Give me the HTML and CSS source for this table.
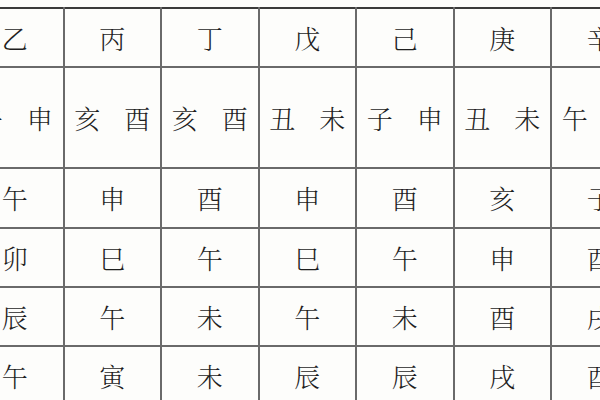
FILE: index.html
```html
<!DOCTYPE html>
<html lang="zh">
<head>
<meta charset="utf-8">
<link rel="stylesheet" href="styles.css">
</head>
<body>
<table class="grid">
  <colgroup>
    <col class="c"><col class="c"><col class="c"><col class="c"><col class="c"><col class="c"><col class="c">
  </colgroup>
  <tr class="r-head"><td>乙</td><td>丙</td><td>丁</td><td>戊</td><td>己</td><td>庚</td><td>辛</td></tr>
  <tr class="r-pair"><td>午　申</td><td>亥　酉</td><td>亥　酉</td><td>丑　未</td><td>子　申</td><td>丑　未</td><td>午　寅</td></tr>
  <tr class="r-a"><td>午</td><td>申</td><td>酉</td><td>申</td><td>酉</td><td>亥</td><td>子</td></tr>
  <tr class="r-b"><td>卯</td><td>巳</td><td>午</td><td>巳</td><td>午</td><td>申</td><td>酉</td></tr>
  <tr class="r-b"><td>辰</td><td>午</td><td>未</td><td>午</td><td>未</td><td>酉</td><td>戌</td></tr>
  <tr class="r-b"><td>午</td><td>寅</td><td>未</td><td>辰</td><td>辰</td><td>戌</td><td>酉</td></tr>
</table>
</body>
</html>
```

FILE: styles.css
```css
html, body {
  margin: 0;
  padding: 0;
  background: #fdfdfb;
  overflow: hidden;
  width: 600px;
  height: 400px;
}

.grid {
  border-collapse: collapse;
  table-layout: fixed;
  width: 682px;
  margin-top: 7px;
  margin-left: -35px;
  font-family: "Noto Serif CJK SC", "Noto Sans CJK SC", serif;
  font-weight: 300;
  font-size: 26px;
  color: #1e1e1e;
}

.c {
  width: 97.5px;
}

.grid td {
  border: 2px solid #6a6a6a;
  text-align: center;
  vertical-align: middle;
  padding: 0;
  line-height: 1;
  white-space: nowrap;
}

.r-pair td {
  letter-spacing: -1px;
  text-indent: -1px;
}

.r-head td {
  border-top-color: #3a3a3a;
  height: 57px;
}

.r-pair td {
  height: 99px;
}

.r-a td {
  height: 58px;
}

.r-b td {
  height: 57px;
}
```
